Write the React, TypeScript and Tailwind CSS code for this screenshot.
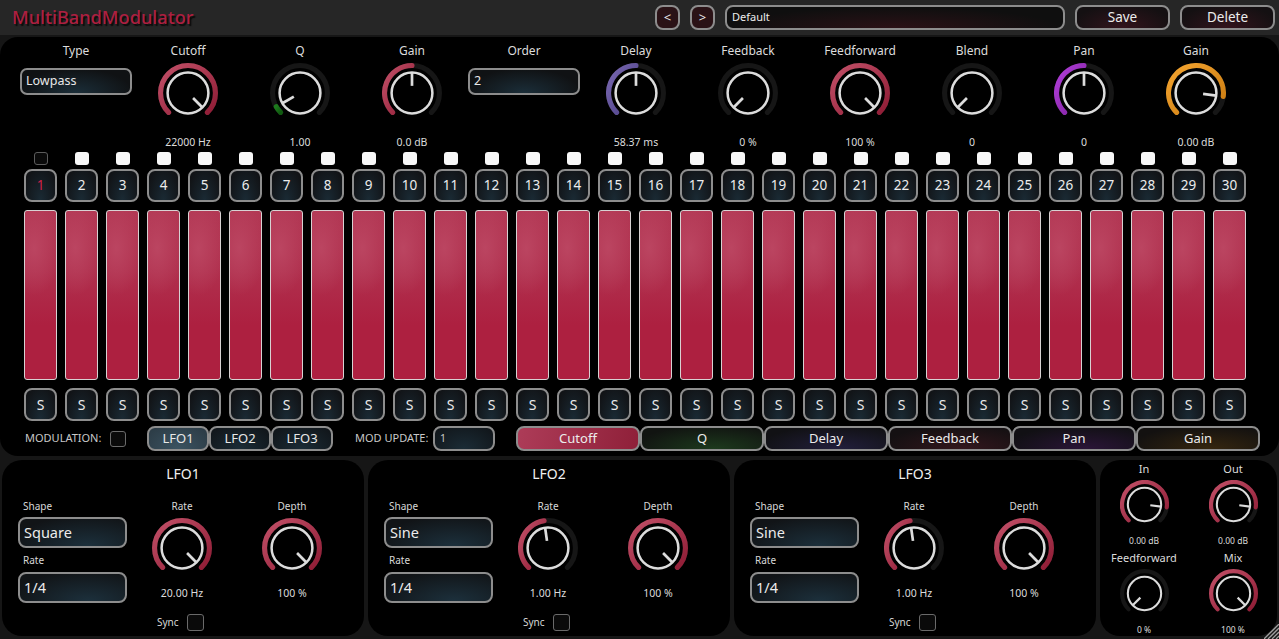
import React from "react";

const font = "font-['Noto_Sans','Open_Sans',sans-serif]";

function polar(cx: number, cy: number, r: number, deg: number) {
  const a = ((deg - 90) * Math.PI) / 180;
  return [cx + r * Math.cos(a), cy + r * Math.sin(a)];
}
function arc(cx: number, cy: number, r: number, a0: number, a1: number) {
  const [x0, y0] = polar(cx, cy, r, a0);
  const [x1, y1] = polar(cx, cy, r, a1);
  return `M${x0} ${y0}A${r} ${r} 0 ${a1 - a0 > 180 ? 1 : 0} 1 ${x1} ${y1}`;
}

let gid = 0;
function Knob({ v, from, to, size = 60 }: { v: number; from: string; to: string; size?: number }) {
  const id = `k${gid++}`;
  const c = size / 2;
  const sw = size * 0.085;
  const ring = c - sw / 2;
  const inner = size * 0.34;
  const a0 = -135;
  const a1 = 135;
  const ang = a0 + (a1 - a0) * v;
  const [px, py] = polar(c, c, inner, ang);
  const [qx, qy] = polar(c, c, inner * 0.35, ang);
  return (
    <svg width={size} height={size} viewBox={`0 0 ${size} ${size}`} className="block shrink-0">
      <defs>
        <linearGradient id={id} x1="0" y1="0" x2="1" y2="1">
          <stop offset="0" stopColor={from} />
          <stop offset="1" stopColor={to} />
        </linearGradient>
      </defs>
      <path d={arc(c, c, ring, a0, a1)} fill="none" stroke="#161616" strokeWidth={sw} strokeLinecap="round" />
      {v > 0 ? <path d={arc(c, c, ring, a0, ang)} fill="none" stroke={`url(#${id})`} strokeWidth={sw} strokeLinecap="round" /> : null}
      <circle cx={c} cy={c} r={inner} fill="none" stroke="#dcdcdc" strokeWidth={size * 0.042} />
      <line x1={px} y1={py} x2={qx} y2={qy} stroke="#dcdcdc" strokeWidth={size * 0.045} />
    </svg>
  );
}

function TopKnob({ label, value, v, from, to }: { label: string; value: string; v: number; from: string; to: string }) {
  return (
    <div className="flex flex-col items-center">
      <div className="h-[26px] text-[12px] leading-[26px] text-[#dcdcdc]">{label}</div>
      <div className="mt-[-1px]">
        <Knob v={v} from={from} to={to} />
      </div>
      <div className="mt-[12px] h-[14px] text-[10.5px] leading-[14px] text-[#dcdcdc]">{value}</div>
    </div>
  );
}

function TopSelect({ label, text }: { label: string; text: string }) {
  return (
    <div className="flex flex-col items-center">
      <div className="h-[26px] text-[12px] leading-[26px] text-[#dcdcdc]">{label}</div>
      <div className="mt-[4px] flex h-[27px] w-[112px] items-center rounded-[7px] border-2 border-[#8c8c8c] bg-[radial-gradient(ellipse_at_50%_100%,#1b2e39,#101214_75%)] pl-[4px] text-[12.5px] text-[#e8e8e8]">
        {text}
      </div>
    </div>
  );
}

const red = ["#c25068", "#8f1c35"];
const grey = ["#161616", "#161616"];

function Strip({ n }: { n: number }) {
  const btn =
    "flex h-[33px] w-[33px] items-center justify-center rounded-[8px] border-2 border-[#8d8d8d] bg-[radial-gradient(ellipse_at_50%_100%,#1a2a34,#111316_85%)]";
  return (
    <div className="flex w-[41px] flex-col items-center">
      {n === 1 ? (
        <div className="h-[13px] w-[14px] rounded-[3px] border border-[#5c5c5c] bg-[#0a0a0a]" />
      ) : (
        <div className="h-[13px] w-[14px] rounded-[3px] bg-[#f8f8f8]" />
      )}
      <div className={`mt-[4px] text-[13.5px] ${btn} ${n === 1 ? "text-[#d0204a]" : "text-[#ececec]"}`}>{n}</div>
      <div className="mt-[8px] h-[170px] w-[33px] rounded-[3px] border border-[#d8d2d3] bg-[radial-gradient(ellipse_26px_48px_at_30%_22%,#bb4561,#bb456100),linear-gradient(180deg,#b2385400_0%,#b23854_0%,#b0304e_35%,#ad2040_68%,#ad2040_100%)]" />
      <div className={`mt-[8px] text-[14px] text-[#ececec] ${btn}`}>S</div>
    </div>
  );
}

function LfoTab({ t, on }: { t: string; on?: boolean }) {
  return (
    <div
      className={`flex h-[25px] w-[62px] items-center justify-center rounded-[8px] border-2 border-[#8d8d8d] text-[13px] text-[#e8e8e8] ${
        on ? "bg-[radial-gradient(ellipse_at_50%_100%,#3b5361,#2b3a44)]" : "bg-[radial-gradient(ellipse_at_50%_100%,#1b2c36,#101418)]"
      }`}
    >
      {t}
    </div>
  );
}

function ModTab({ t, bg }: { t: string; bg: string }) {
  return (
    <div className={`flex h-[25px] w-[124px] items-center justify-center rounded-[8px] border-2 border-[#8d8d8d] text-[13px] text-[#ececec] ${bg}`}>{t}</div>
  );
}

function LfoSelect({ t }: { t: string }) {
  return (
    <div className="flex h-[31px] w-[109px] items-center rounded-[8px] border-2 border-[#8d8d8d] bg-[radial-gradient(ellipse_at_65%_100%,#1c303c,#111417_80%)] pl-[4px] text-[14.5px] text-[#ececec]">
      {t}
    </div>
  );
}

function Lfo({ name, shape, rate, rv }: { name: string; shape: string; rate: string; rv: number }) {
  return (
    <div className="flex h-[176px] w-[362px] flex-col rounded-[20px] bg-black">
      <div className="mt-[3px] h-[22px] text-center text-[14px] leading-[22px] text-[#f0f0f0]">{name}</div>
      <div className="mt-[13px] flex">
        <div className="ml-[16px] flex w-[109px] flex-col">
          <div className="ml-[5px] h-[16px] text-[10px] leading-[16px] text-[#d8d8d8]">Shape</div>
          <div className="mt-[3px]">
            <LfoSelect t={shape} />
          </div>
          <div className="ml-[5px] mt-[4px] h-[16px] text-[10px] leading-[16px] text-[#d8d8d8]">Rate</div>
          <div className="mt-[4px]">
            <LfoSelect t="1/4" />
          </div>
        </div>
        <div className="ml-[25px] flex w-[60px] flex-col items-center">
          <div className="h-[16px] text-[10px] leading-[16px] text-[#d8d8d8]">Rate</div>
          <div className="mt-[4px]">
            <Knob v={rv} from={red[0]} to={red[1]} />
          </div>
          <div className="mt-[8px] whitespace-nowrap text-[10.5px] leading-[14px] text-[#dcdcdc]">{rate}</div>
        </div>
        <div className="ml-[50px] flex w-[60px] flex-col items-center">
          <div className="h-[16px] text-[10px] leading-[16px] text-[#d8d8d8]">Depth</div>
          <div className="mt-[4px]">
            <Knob v={1} from={red[0]} to={red[1]} />
          </div>
          <div className="mt-[8px] whitespace-nowrap text-[10.5px] leading-[14px] text-[#dcdcdc]">100 %</div>
        </div>
      </div>
      <div className="ml-[155px] mt-[11px] flex items-center gap-[8px]">
        <span className="text-[10px] text-[#d8d8d8]">Sync</span>
        <div className="h-[17px] w-[17px] rounded-[3px] border border-[#6a6a6a] bg-[#0a0a0a]" />
      </div>
    </div>
  );
}

function SmallKnob({ label, value, v, fr }: { label: string; value: string; v: number; fr: string[] }) {
  return (
    <div className="mb-[3px] flex w-[66px] flex-col items-center">
      <div className="h-[16px] whitespace-nowrap text-[11px] leading-[16px] text-[#dcdcdc]">{label}</div>
      <div className="mt-[3px]">
        <Knob v={v} from={fr[0]} to={fr[1]} size={49} />
      </div>
      <div className="mt-[6px] h-[12px] whitespace-nowrap text-[8.5px] leading-[12px] text-[#dcdcdc]">{value}</div>
    </div>
  );
}

export default function App() {
  gid = 0;
  const strips = Array.from({ length: 30 }, (_, i) => i + 1);
  const hb = "border-2 border-[#8d8d8d] rounded-[8px] flex h-[25px] items-center";
  return (
    <div className={`relative h-[639px] w-[1279px] overflow-hidden bg-[#161616] ${font}`}>
      <header className="flex h-[35px] items-center bg-[#262626] pl-[12px] pr-[4px]">
        <div className="text-[18.2px] font-medium text-[#ad1f40] [text-shadow:2px_2px_1px_#0b0b0b]">MultiBandModulator</div>
        <div className="ml-auto flex items-center">
          <div className={`${hb} w-[25px] justify-center bg-[#2a1216] text-[13px] text-[#ececec]`}>&lt;</div>
          <div className={`${hb} ml-[10px] w-[25px] justify-center bg-[#2a1216] text-[13px] text-[#ececec]`}>&gt;</div>
          <div className={`${hb} ml-[10px] w-[340px] bg-[radial-gradient(ellipse_at_50%_100%,#2b1116,#0f0f0f_70%)] pl-[5px] text-[11px] text-[#ececec]`}>Default</div>
          <div className={`${hb} ml-[10px] w-[95px] justify-center bg-[radial-gradient(ellipse_at_50%_100%,#33141c,#141012_80%)] text-[13.5px] text-[#ececec]`}>Save</div>
          <div className={`${hb} ml-[10px] w-[95px] justify-center bg-[radial-gradient(ellipse_at_50%_100%,#33141c,#141012_80%)] text-[13.5px] text-[#ececec]`}>Delete</div>
        </div>
      </header>

      <section className="mt-[2px] h-[419px] rounded-[18px] bg-black pl-[20px] pt-[1px]">
        <div className="grid grid-cols-[repeat(11,112px)]">
          <TopSelect label="Type" text="Lowpass" />
          <TopKnob label="Cutoff" value="22000 Hz" v={1} from={red[0]} to={red[1]} />
          <TopKnob label="Q" value="1.00" v={0.055} from="#1d7a1d" to="#0f5a0f" />
          <TopKnob label="Gain" value="0.0 dB" v={0.5} from={red[0]} to={red[1]} />
          <TopSelect label="Order" text="2" />
          <TopKnob label="Delay" value="58.37 ms" v={0.5} from="#7a68b0" to="#4a3f86" />
          <TopKnob label="Feedback" value="0 %" v={0} from={red[0]} to={red[1]} />
          <TopKnob label="Feedforward" value="100 %" v={1} from={red[0]} to={red[1]} />
          <TopKnob label="Blend" value="0" v={0} from={red[0]} to={red[1]} />
          <TopKnob label="Pan" value="0" v={0.5} from="#b23fdb" to="#7d1f9c" />
          <TopKnob label="Gain" value="0.00 dB" v={0.86} from="#f5a530" to="#c87a10" />
        </div>
        <div className="mt-[3px] flex">
          {strips.map((n) => (
            <Strip key={n} n={n} />
          ))}
        </div>
        <div className="mt-[5px] flex items-center">
          <span className="ml-[5px] w-[85px] whitespace-nowrap text-[11px] text-[#c8c8c8]">MODULATION:</span>
          <div className="h-[16px] w-[16px] rounded-[3px] border border-[#6a6a6a] bg-[#0a0a0a]" />
          <div className="ml-[21px] flex">
            <LfoTab t="LFO1" on />
            <LfoTab t="LFO2" />
            <LfoTab t="LFO3" />
          </div>
          <span className="ml-[22px] w-[78px] whitespace-nowrap text-[11px] text-[#c8c8c8]">MOD UPDATE:</span>
          <div className="flex h-[25px] w-[62px] items-center rounded-[8px] border-2 border-[#8d8d8d] bg-[radial-gradient(ellipse_at_50%_100%,#1b2c36,#101418)] pl-[5px] text-[10.5px] text-[#c8c8c8]">1</div>
          <div className="ml-[21px] flex">
            <ModTab t="Cutoff" bg="bg-[linear-gradient(100deg,#ad3c58,#8f2039)]" />
            <ModTab t="Q" bg="bg-[radial-gradient(ellipse_at_60%_100%,#1d3a1d,#111411_80%)]" />
            <ModTab t="Delay" bg="bg-[radial-gradient(ellipse_at_60%_100%,#221f3c,#111114_80%)]" />
            <ModTab t="Feedback" bg="bg-[radial-gradient(ellipse_at_60%_100%,#33171d,#141012_80%)]" />
            <ModTab t="Pan" bg="bg-[radial-gradient(ellipse_at_60%_100%,#2b1538,#111014_80%)]" />
            <ModTab t="Gain" bg="bg-[radial-gradient(ellipse_at_60%_100%,#35260f,#131110_80%)]" />
          </div>
        </div>
      </section>

      <section className="mt-[4px] flex gap-[4px] pl-[2px]">
        <Lfo name="LFO1" shape="Square" rate="20.00 Hz" rv={1} />
        <Lfo name="LFO2" shape="Sine" rate="1.00 Hz" rv={0.47} />
        <Lfo name="LFO3" shape="Sine" rate="1.00 Hz" rv={0.47} />
        <div className="grid h-[176px] w-[177px] grid-cols-[66px_66px] content-start justify-center gap-x-[23px] rounded-[20px] bg-black pt-[1px]">
          <SmallKnob label="In" value="0.00 dB" v={0.86} fr={red} />
          <SmallKnob label="Out" value="0.00 dB" v={0.86} fr={red} />
          <SmallKnob label="Feedforward" value="0 %" v={0} fr={grey} />
          <SmallKnob label="Mix" value="100 %" v={1} fr={red} />
        </div>
      </section>

      <svg width="15" height="15" viewBox="0 0 15 15" className="absolute bottom-0 right-0">
        <path d="M0 15L15 0M4 15L15 4M8 15L15 8M12 15L15 12" stroke="#a0a0a0" strokeWidth="1.3" />
      </svg>
    </div>
  );
}
